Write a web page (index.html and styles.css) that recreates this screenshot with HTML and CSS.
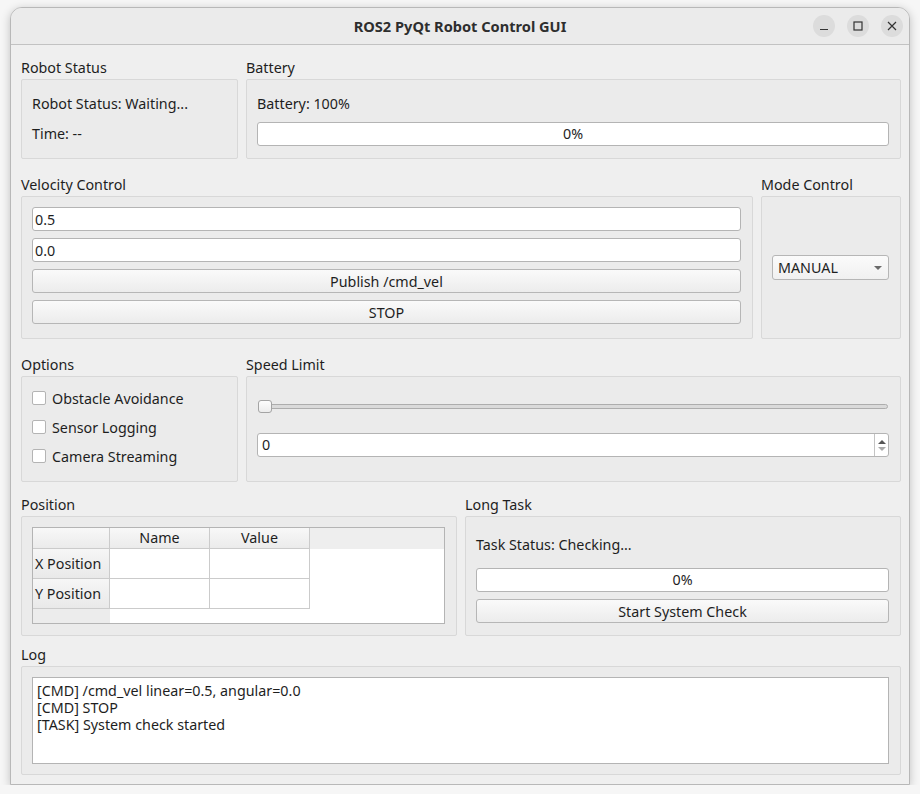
FILE: index.html
```html
<!DOCTYPE html>
<html lang="en">
<head>
    <meta charset="UTF-8">
    <title>ROS2 PyQt Robot Control GUI</title>
    <link rel="stylesheet" href="styles.css">
</head>
<body>
    <div class="window">
        <div class="titlebar">
            <div class="title">ROS2 PyQt Robot Control GUI</div>
            <div class="win-buttons">
                <span class="win-btn">
                    <svg width="10" height="10" viewBox="0 0 10 10"><path d="M1 8.5h8" stroke="#333" stroke-width="1.2"/></svg>
                </span>
                <span class="win-btn">
                    <svg width="10" height="10" viewBox="0 0 10 10"><rect x="1" y="1" width="8" height="8" fill="none" stroke="#333" stroke-width="1.2"/></svg>
                </span>
                <span class="win-btn">
                    <svg width="10" height="10" viewBox="0 0 10 10"><path d="M1 1l8 8M9 1l-8 8" stroke="#333" stroke-width="1.2"/></svg>
                </span>
            </div>
        </div>

        <div class="content">
            <!-- status + battery -->
            <div class="row row-top cols-status">
                <section class="group">
                    <div class="group-title">Robot Status</div>
                    <div class="group-box status-box">
                        <div class="label">Robot Status: Waiting...</div>
                        <div class="label">Time: --</div>
                    </div>
                </section>
                <section class="group">
                    <div class="group-title">Battery</div>
                    <div class="group-box status-box">
                        <div class="label">Battery: 100%</div>
                        <div class="progress">0%</div>
                    </div>
                </section>
            </div>

            <!-- velocity + mode -->
            <div class="row cols-velocity">
                <section class="group">
                    <div class="group-title">Velocity Control</div>
                    <div class="group-box velocity-box">
                        <input class="line-edit" type="text" value="0.5">
                        <input class="line-edit" type="text" value="0.0">
                        <button class="push-btn">Publish /cmd_vel</button>
                        <button class="push-btn">STOP</button>
                    </div>
                </section>
                <section class="group">
                    <div class="group-title">Mode Control</div>
                    <div class="group-box mode-box">
                        <div class="combo">
                            <span>MANUAL</span>
                            <span class="combo-arrow"></span>
                        </div>
                    </div>
                </section>
            </div>

            <!-- options + speed -->
            <div class="row cols-status">
                <section class="group">
                    <div class="group-title">Options</div>
                    <div class="group-box options-box">
                        <label class="check"><span class="check-box"></span>Obstacle Avoidance</label>
                        <label class="check"><span class="check-box"></span>Sensor Logging</label>
                        <label class="check"><span class="check-box"></span>Camera Streaming</label>
                    </div>
                </section>
                <section class="group">
                    <div class="group-title">Speed Limit</div>
                    <div class="group-box speed-box">
                        <div class="slider">
                            <div class="slider-groove"></div>
                            <div class="slider-handle"></div>
                        </div>
                        <div class="spinbox">
                            <span class="spin-value">0</span>
                            <span class="spin-arrows">
                                <span class="spin-up"></span>
                                <span class="spin-down"></span>
                            </span>
                        </div>
                    </div>
                </section>
            </div>

            <!-- position + long task -->
            <div class="row row-pos cols-half">
                <section class="group">
                    <div class="group-title">Position</div>
                    <div class="group-box position-box">
                        <div class="table">
                            <div class="th corner"></div>
                            <div class="th">Name</div>
                            <div class="th">Value</div>
                            <div class="th-fill"></div>

                            <div class="rh">X Position</div>
                            <div class="td"></div>
                            <div class="td"></div>
                            <div class="td-empty"></div>

                            <div class="rh">Y Position</div>
                            <div class="td"></div>
                            <div class="td"></div>
                            <div class="td-empty"></div>

                            <div class="rh-fill"></div>
                            <div class="td-empty"></div>
                            <div class="td-empty"></div>
                            <div class="td-empty"></div>
                        </div>
                    </div>
                </section>
                <section class="group">
                    <div class="group-title">Long Task</div>
                    <div class="group-box task-box">
                        <div class="label">Task Status: Checking...</div>
                        <div class="progress">0%</div>
                        <button class="push-btn">Start System Check</button>
                    </div>
                </section>
            </div>

            <!-- log -->
            <div class="row row-log">
                <section class="group">
                    <div class="group-title">Log</div>
                    <div class="group-box log-box">
                        <div class="log-text">
                            <div class="log-line">[CMD] /cmd_vel linear=0.5, angular=0.0</div>
                            <div class="log-line">[CMD] STOP</div>
                            <div class="log-line">[TASK] System check started</div>
                        </div>
                    </div>
                </section>
            </div>
        </div>
    </div>
</body>
</html>
```

FILE: styles.css
```css
* {
    box-sizing: border-box;
}

body {
    margin: 0;
    background-color: #f6f6f6;
    font-family: "Noto Sans", "DejaVu Sans", sans-serif;
    font-size: 14.3px;
    color: #1e1e1e;
}

.window {
    width: 900px;
    height: 778px;
    margin: 7px 0 0 10px;
    background-color: #efefef;
    border: 1px solid #b8b8b8;
    border-radius: 12px 12px 0 0;
    box-shadow: 0 2px 10px rgba(0, 0, 0, 0.22);
    overflow: hidden;
    display: flex;
    flex-direction: column;
}

.titlebar {
    height: 37px;
    flex: none;
    background-color: #ebebeb;
    border-bottom: 1px solid #c2c2c2;
    display: flex;
    align-items: center;
    justify-content: center;
    position: relative;
}

.title {
    font-weight: bold;
    font-size: 14.6px;
    color: #2e2e2e;
}

.win-buttons {
    position: absolute;
    right: 6px;
    top: 7px;
    display: flex;
    gap: 12px;
}

.win-btn {
    width: 22px;
    height: 22px;
    border-radius: 50%;
    background-color: #dcdcdc;
    display: flex;
    align-items: center;
    justify-content: center;
}

.content {
    padding: 11px 8px 9px 10px;
    display: flex;
    flex-direction: column;
}

.row {
    display: grid;
    grid-template-columns: 1fr;
    column-gap: 8px;
    margin-top: 14px;
}

.row-top {
    margin-top: 0;
}

.row-pos {
    margin-top: 11px;
}

.row-log {
    margin-top: 7px;
}

.cols-status {
    grid-template-columns: 217px 1fr;
}

.cols-velocity {
    grid-template-columns: 732px 1fr;
}

.cols-half {
    grid-template-columns: 436px 1fr;
}

.group {
    display: flex;
    flex-direction: column;
}

.group-title {
    height: 23px;
    line-height: 23px;
}

.group-box {
    background-color: #ebebeb;
    border: 1px solid #d8d8d8;
    border-radius: 2px;
    display: flex;
    flex-direction: column;
}

.label {
    height: 22px;
    line-height: 22px;
}

/* status row */
.status-box {
    height: 80px;
    padding: 13px 11px 0 10px;
    gap: 8px;
}

.status-box .progress {
    margin-top: -1px;
}

.progress {
    height: 24px;
    background-color: #fff;
    border: 1px solid #b4b4b4;
    border-radius: 3px;
    text-align: center;
    line-height: 22px;
}

/* velocity row */
.velocity-box {
    height: 143px;
    padding: 10px 11px 0 10px;
    gap: 7px;
}

.line-edit {
    height: 24px;
    width: 100%;
    margin: 0;
    padding: 0 2px;
    font: inherit;
    color: inherit;
    background-color: #fff;
    border: 1px solid #b4b4b4;
    border-radius: 3px;
    outline: none;
}

.push-btn {
    height: 24px;
    width: 100%;
    margin: 0;
    padding: 0;
    font: inherit;
    color: inherit;
    background: linear-gradient(to bottom, #fafafa, #ececec);
    border: 1px solid #b6b6b6;
    border-radius: 3px;
}

.mode-box {
    height: 143px;
    padding: 0 11px 0 10px;
    justify-content: center;
}

.combo {
    height: 25px;
    padding: 0 5px;
    background: linear-gradient(to bottom, #fbfbfb, #f0f0f0);
    border: 1px solid #b6b6b6;
    border-radius: 3px;
    display: flex;
    align-items: center;
    justify-content: space-between;
}

.combo-arrow {
    width: 0;
    height: 0;
    border-left: 4px solid transparent;
    border-right: 4px solid transparent;
    border-top: 4px solid #6a6a6a;
    margin-right: 1px;
}

/* options row */
.options-box {
    height: 106px;
    padding: 10px 11px 0 10px;
    gap: 7px;
}

.check {
    height: 22px;
    display: flex;
    align-items: center;
    gap: 6px;
}

.check-box {
    width: 14px;
    height: 14px;
    background-color: #fff;
    border: 1px solid #b4b4b4;
    border-radius: 2px;
}

.speed-box {
    height: 106px;
    padding: 10px 11px 0 10px;
}

.slider {
    height: 38px;
    position: relative;
}

.slider-groove {
    position: absolute;
    left: 1px;
    right: 1px;
    top: 17px;
    height: 5px;
    background-color: #dadada;
    border: 1px solid #adadad;
    border-radius: 3px;
}

.slider-handle {
    position: absolute;
    left: 1px;
    top: 13px;
    width: 14px;
    height: 13px;
    background: linear-gradient(to bottom, #fdfdfd, #ececec);
    border: 1px solid #a4a4a4;
    border-radius: 3px;
}

.spinbox {
    height: 24px;
    margin-top: 8px;
    background-color: #fff;
    border: 1px solid #b4b4b4;
    border-radius: 3px;
    display: flex;
}

.spin-value {
    flex: 1;
    padding-left: 4px;
    line-height: 22px;
}

.spin-arrows {
    width: 14px;
    border-left: 1px solid #c4c4c4;
    display: flex;
    flex-direction: column;
    align-items: center;
    justify-content: center;
    gap: 3px;
}

.spin-up {
    border-left: 4px solid transparent;
    border-right: 4px solid transparent;
    border-bottom: 4px solid #555;
}

.spin-down {
    border-left: 4px solid transparent;
    border-right: 4px solid transparent;
    border-top: 4px solid #aaa;
}

/* position table */
.position-box {
    height: 120px;
    padding: 10px 11px 0 10px;
}

.table {
    height: 97px;
    background-color: #fff;
    border: 1px solid #b4b4b4;
    display: grid;
    grid-template-columns: 77px 100px 100px 1fr;
    grid-template-rows: 21px 30px 30px 1fr;
}

.th {
    background: linear-gradient(to bottom, #f8f8f8, #ebebeb);
    border-right: 1px solid #cbcbcb;
    border-bottom: 1px solid #cbcbcb;
    text-align: center;
    line-height: 20px;
}

.th-fill {
    background-color: #eeeeee;
}

.rh {
    background: linear-gradient(to bottom, #f6f6f6, #e9e9e9);
    border-right: 1px solid #cbcbcb;
    border-bottom: 1px solid #cbcbcb;
    padding-left: 2px;
    line-height: 29px;
}

.rh-fill {
    background-color: #ececec;
}

.td {
    border-right: 1px solid #cbcbcb;
    border-bottom: 1px solid #cbcbcb;
}

/* long task */
.task-box {
    height: 120px;
    padding: 17px 11px 0 10px;
}

.task-box .progress {
    margin-top: 12px;
}

.task-box .push-btn {
    margin-top: 7px;
}

/* log */
.log-box {
    height: 109px;
    padding: 10px 11px 0 10px;
}

.log-text {
    height: 87px;
    background-color: #fff;
    border: 1px solid #b4b4b4;
    padding: 4px 4px;
}

.log-line {
    height: 17px;
    line-height: 17px;
}
```
